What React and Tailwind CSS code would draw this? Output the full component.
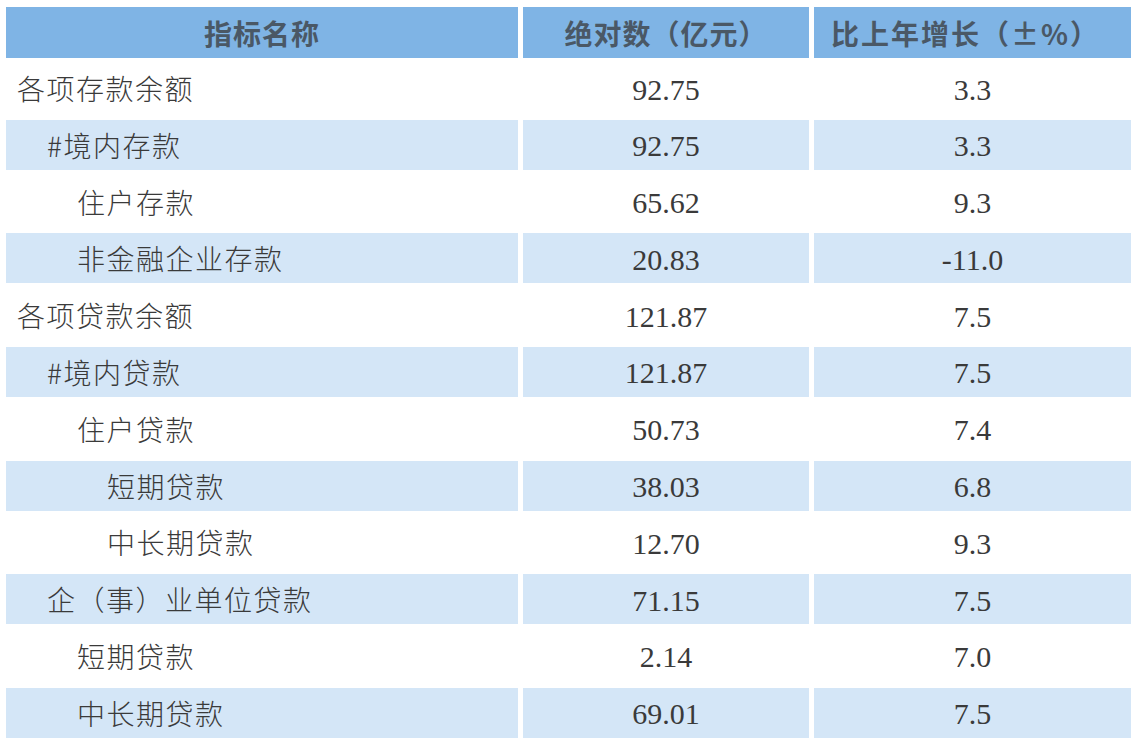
import React from 'react';

const rows = [
    { name: '各项存款余额', level: 0, value: '92.75', growth: '3.3' },
    { name: '#境内存款', level: 1, value: '92.75', growth: '3.3' },
    { name: '住户存款', level: 2, value: '65.62', growth: '9.3' },
    { name: '非金融企业存款', level: 2, value: '20.83', growth: '-11.0' },
    { name: '各项贷款余额', level: 0, value: '121.87', growth: '7.5' },
    { name: '#境内贷款', level: 1, value: '121.87', growth: '7.5' },
    { name: '住户贷款', level: 2, value: '50.73', growth: '7.4' },
    { name: '短期贷款', level: 3, value: '38.03', growth: '6.8' },
    { name: '中长期贷款', level: 3, value: '12.70', growth: '9.3' },
    { name: '企（事）业单位贷款', level: 1, value: '71.15', growth: '7.5' },
    { name: '短期贷款', level: 2, value: '2.14', growth: '7.0' },
    { name: '中长期贷款', level: 2, value: '69.01', growth: '7.5' },
];

const indent = ['pl-[11px]', 'pl-[41px]', 'pl-[71px]', 'pl-[101px]'];

const App = () => {
    return (
        <div className="w-[1134px] h-[738px] bg-white overflow-hidden pl-[6px] pt-[7px]">
            <div className="grid grid-cols-[512px_286px_317px] gap-x-[5px] h-[51px] text-[28px] font-bold text-[#4a5866] font-['Noto_Sans_CJK_SC',sans-serif]">
                <div className="bg-[#7fb4e5] flex items-center justify-center tracking-[1px]">指标名称</div>
                <div className="bg-[#7fb4e5] flex items-center justify-center tracking-[1px]">绝对数（亿元）</div>
                <div className="bg-[#7fb4e5] flex items-center justify-center tracking-[2px] pr-[14px]">比上年增长（±%）</div>
            </div>

            <div className="flex flex-col gap-y-[6.8px] mt-[5px]">
                {rows.map((row, i) => {
                    const shade = i % 2 === 1 ? 'bg-[#d4e6f7]' : '';
                    return (
                        <div key={i} className="grid grid-cols-[512px_286px_317px] gap-x-[5px] h-[50px] text-[#3a3a3a]">
                            <div
                                className={`${shade} ${indent[row.level]} flex items-center text-[28px] tracking-[1.5px] font-light font-['Noto_Sans_CJK_SC',sans-serif]`}
                            >
                                {row.name}
                            </div>
                            <div className={`${shade} flex items-center justify-center text-[30px] pt-[2px] font-['Liberation_Serif','DejaVu_Serif',serif]`}>
                                {row.value}
                            </div>
                            <div className={`${shade} flex items-center justify-center text-[30px] pt-[2px] font-['Liberation_Serif','DejaVu_Serif',serif]`}>
                                {row.growth}
                            </div>
                        </div>
                    );
                })}
            </div>
        </div>
    );
};

export default App;
